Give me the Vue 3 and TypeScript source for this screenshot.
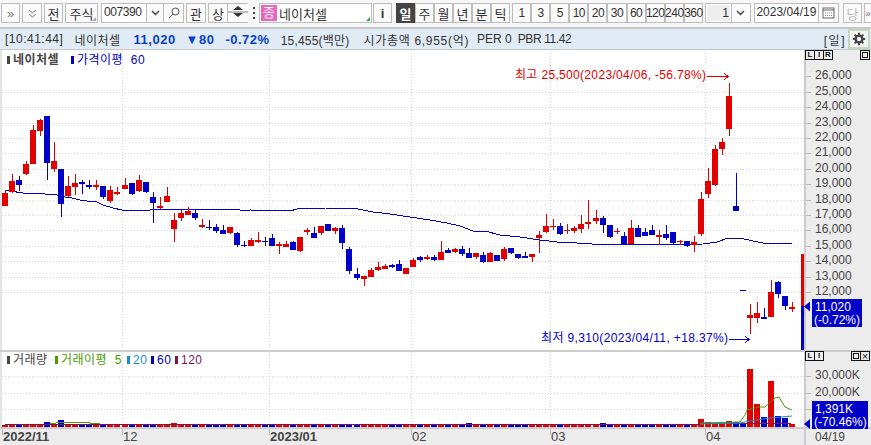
<script setup lang="ts">
import { computed } from 'vue';

// [색(r/b), 꼬리 위, 몸통 위, 몸통 아래, 꼬리 아래] — 화면 y 좌표
type Candle = [string, number, number, number, number];

const RED = '#e00000';
const BLUE = '#0000c8';
const STEP = 7.03;

const raw: Candle[] = [
  ['r', 190, 193, 206, 206], ['r', 174, 181, 192, 193], ['b', 176, 180, 185, 191], ['r', 161, 164, 174, 175],
  ['r', 125, 130, 164, 164], ['r', 119, 120, 131, 136], ['b', 116, 116, 163, 180], ['r', 142, 161, 169, 172],
  ['b', 169, 169, 204, 217], ['r', 176, 186, 196, 197], ['r', 174, 183, 187, 195], ['b', 180, 182, 184, 194],
  ['b', 180, 185, 187, 189], ['r', 180, 185, 187, 190], ['b', 186, 186, 197, 199], ['r', 186, 190, 201, 203],
  ['r', 187, 192, 194, 195], ['r', 178, 185, 189, 189], ['b', 183, 183, 194, 195], ['r', 175, 180, 191, 192],
  ['b', 182, 182, 192, 193], ['b', 192, 197, 203, 223], ['r', 197, 206, 208, 209], ['r', 187, 196, 202, 202],
  ['r', 213, 220, 229, 242], ['r', 210, 213, 218, 221], ['r', 207, 211, 215, 215], ['b', 210, 213, 218, 220],
  ['r', 219, 225, 227, 228], ['b', 220, 227, 228, 230], ['b', 224, 227, 231, 233], ['b', 225, 230, 234, 234],
  ['r', 227, 227, 233, 234], ['b', 232, 233, 245, 247], ['b', 241, 245, 246, 247], ['r', 238, 240, 246, 246],
  ['r', 232, 240, 242, 243], ['b', 237, 241, 242, 246], ['b', 234, 238, 246, 246], ['r', 242, 244, 246, 254],
  ['r', 241, 244, 247, 247], ['b', 241, 242, 250, 250], ['r', 237, 237, 251, 252], ['r', 228, 230, 232, 235],
  ['b', 227, 233, 238, 238], ['r', 226, 226, 233, 235], ['b', 224, 224, 231, 231], ['r', 227, 228, 231, 234],
  ['b', 225, 228, 243, 249], ['b', 247, 249, 271, 274], ['b', 268, 274, 278, 280], ['r', 276, 276, 279, 286],
  ['r', 268, 270, 277, 277], ['r', 262, 267, 270, 271], ['r', 264, 266, 269, 269], ['b', 264, 265, 267, 268],
  ['b', 260, 264, 271, 271], ['r', 268, 268, 274, 274], ['r', 258, 260, 267, 267], ['b', 256, 257, 260, 262],
  ['r', 255, 257, 259, 260], ['b', 255, 257, 260, 261], ['r', 241, 252, 260, 260], ['b', 248, 250, 253, 253],
  ['r', 248, 249, 252, 253], ['b', 246, 249, 254, 256], ['b', 248, 253, 258, 258], ['r', 253, 253, 257, 259],
  ['b', 252, 255, 262, 263], ['r', 252, 253, 262, 262], ['b', 255, 255, 261, 261], ['r', 247, 249, 259, 261],
  ['b', 248, 248, 253, 254], ['b', 254, 254, 258, 259], ['b', 252, 256, 258, 258], ['r', 254, 254, 257, 262],
  ['r', 231, 235, 238, 253], ['r', 214, 226, 232, 233], ['r', 219, 226, 227, 230], ['b', 223, 226, 234, 235],
  ['r', 224, 230, 231, 234], ['r', 226, 228, 231, 233], ['r', 215, 224, 229, 233], ['r', 200, 222, 224, 229],
  ['r', 210, 218, 221, 224], ['b', 216, 218, 225, 233], ['b', 225, 225, 237, 238], ['r', 228, 231, 232, 234],
  ['b', 232, 236, 245, 245], ['r', 220, 228, 244, 244], ['b', 225, 228, 237, 237], ['b', 228, 232, 236, 236],
  ['b', 225, 230, 235, 235], ['r', 230, 235, 237, 245], ['b', 225, 234, 238, 240], ['b', 232, 232, 243, 244],
  ['r', 240, 241, 242, 245], ['b', 241, 241, 246, 247], ['r', 236, 242, 245, 252], ['r', 192, 199, 234, 236],
  ['r', 168, 181, 194, 198], ['r', 145, 149, 185, 186], ['r', 138, 142, 149, 155], ['r', 83, 96, 129, 136],
  ['b', 173, 206, 211, 211], ['b', 290, 290, 291, 291], ['r', 304, 315, 318, 334], ['r', 302, 313, 318, 323],
  ['b', 308, 317, 319, 319], ['r', 280, 292, 317, 317], ['b', 281, 282, 294, 298], ['b', 296, 296, 306, 310],
  ['r', 302, 307, 309, 312],
];

const candleX = (i: number) => Math.round(5 + STEP * i);

const candles = raw.map((c, i) => ({
  x: candleX(i),
  color: c[0] === 'r' ? RED : BLUE,
  wickY: c[1],
  wickH: c[4] - c[1],
  bodyY: c[2],
  bodyH: Math.max(c[3] - c[2], 1),
}));

const maLine = [
  [5, 190], [10, 191], [23, 193], [43, 193], [45, 194], [57, 195], [65, 197], [72, 198], [80, 200], [87, 201],
  [97, 202], [103, 205], [113, 208], [122, 210], [150, 210], [160, 209], [213, 209], [240, 210], [247, 211],
  [250, 210], [290, 211], [297, 209], [325, 208], [358, 209], [373, 212], [390, 214], [410, 217], [430, 220],
  [447, 223], [460, 226], [473, 231], [485, 231], [500, 235], [520, 237], [540, 240], [557, 242], [577, 243],
  [607, 245], [703, 244], [717, 242], [728, 238], [740, 238], [753, 241], [763, 243], [782, 243], [792, 244],
].map((p) => p.join(',')).join(' ');

// 거래량 막대 높이 (대부분 2px)
const volOverride: Record<number, number> = {
  6: 5, 8: 7, 24: 4, 41: 3, 60: 3, 64: 3, 66: 4, 69: 3, 71: 3, 72: 3,
  85: 4, 91: 3, 99: 8, 100: 5, 101: 4, 102: 3, 103: 6, 104: 5, 105: 4,
  106: 58, 107: 23, 108: 10, 109: 46, 110: 11, 111: 9, 112: 3,
};
const volumes = raw.map((c, i) => ({
  x: candleX(i),
  h: volOverride[i] ?? 2,
  color: c[0] === 'r' ? RED : BLUE,
}));

const priceTicks = computed(() => {
  const list: { y: number; label: string }[] = [];
  for (let k = 0; k <= 15; k++) {
    list.push({ y: 76.4 + 15.4 * k, label: `${26 - k},000` });
  }
  return list;
});

const gridV = [122, 269, 411, 550, 705];
const gridH = priceTicks.value.slice(1, 15).map((t) => Math.round(t.y));
const volGrid = [376, 393, 409];
const timeframes = ['1', '3', '5', '10', '20', '30', '60', '120', '240', '360'];
const periods = ['주', '월', '년', '분', '틱'];
const monthLabels = [
  { text: '2022/11', width: 120, bold: true },
  { text: '12', width: 147, bold: false },
  { text: '2023/01', width: 142, bold: true },
  { text: '02', width: 139, bold: false },
  { text: '03', width: 155, bold: false },
  { text: '04', width: 40, bold: false },
];
</script>

<template>
  <div class="app">
    <div class="toolbar">
      <button class="btn w19 dim">»</button>
      <button class="btn w20 dim">
        <svg width="9" height="9" viewBox="0 0 9 9"><path d="M1 1l3.5 3L8 1M1 5l3.5 3L8 5" fill="none" stroke="#777" /></svg>
      </button>
      <button class="btn w19">전</button>
      <button class="btn w33 corner">주식</button>
      <div class="code-box">
        <span class="code">007390</span>
        <span class="cell w17">
          <svg width="9" height="6" viewBox="0 0 9 6"><path d="M1 1l3.5 3.5L8 1" fill="none" stroke="#444" stroke-width="1.4" /></svg>
        </span>
        <span class="cell w20">
          <svg width="12" height="12" viewBox="0 0 12 12"><circle cx="7.5" cy="4.5" r="3.5" fill="none" stroke="#555" /><path d="M5 7L1 11" stroke="#555" /></svg>
        </span>
      </div>
      <button class="btn w20">관</button>
      <button class="btn w20 lead">상</button>
      <div class="updown">
        <span class="tri-up" />
        <span class="tri-down" />
      </div>
      <div class="dots"><i /><i /><i /></div>
      <div class="name-box corner-green">
        <span class="badge">종</span>
        <span>네이처셀</span>
      </div>
      <button class="btn w19 bold-i">i</button>
      <div class="group left4">
        <button class="btn w19 dark">일</button>
        <button v-for="p in periods" :key="p" class="btn w19">{{ p }}</button>
      </div>
      <div class="group left2">
        <button v-for="t in timeframes" :key="t" class="btn tf">{{ t }}</button>
      </div>
      <div class="count-box">
        <span class="count">1</span>
        <span class="cell w18">
          <svg width="9" height="6" viewBox="0 0 9 6"><path d="M1 1l3.5 3.5L8 1" fill="none" stroke="#444" stroke-width="1.4" /></svg>
        </span>
      </div>
      <div class="date-box">
        <span class="date">2023/04/19</span>
        <span class="cell w20">
          <svg width="13" height="12" viewBox="0 0 13 12"><rect x="1" y="1" width="11" height="10" fill="none" stroke="#666" /><path d="M1 3h11" stroke="#666" /><path d="M3 6h7M3 8.500h7" stroke="#888" stroke-dasharray="1 1" /></svg>
        </span>
      </div>
      <button class="btn w19 faded">당</button>
      <button class="btn w8 dim">»</button>
    </div>

    <div class="infobar">
      <span class="clock">[10:41:44]</span>
      <span class="iname">네이처셀</span>
      <b class="down price">11,020</b>
      <b class="down chg">▼80</b>
      <b class="down pct">-0.72%</b>
      <span class="amt">15,455(백만)</span>
      <span class="cap">시가총액 6,955(억)</span>
      <span class="per">PER 0</span>
      <span class="pbr">PBR 11.42</span>
      <span class="unit">[일]</span>
      <button class="gear">
        <svg width="14" height="14" viewBox="0 0 14 14">
          <circle cx="7" cy="7" r="3.400" fill="none" stroke="#444" stroke-width="2.400" />
          <path d="M7 .8v2.400M7 10.800v2.400M.8 7h2.400M10.800 7h2.400M2.600 2.600l1.700 1.700M9.700 9.700l1.700 1.700M2.600 11.400l1.700-1.700M9.700 4.300l1.700-1.700" stroke="#444" stroke-width="2" />
        </svg>
      </button>
    </div>

    <div class="pane price-pane">
      <div class="plot">
        <svg class="chart" width="804" height="300" viewBox="0 50 804 300" shape-rendering="crispEdges">
          <rect x="0" y="50" width="2" height="300" fill="#e4e4e4" />
          <line v-for="y in gridH" :key="y" x1="2" x2="804" :y1="y + 0.5" :y2="y + 0.5" class="grid" />
          <line v-for="x in gridV" :key="x" :x1="x + 0.5" :x2="x + 0.5" y1="50" y2="350" class="grid" />
          <polyline :points="maLine" fill="none" :stroke="BLUE" stroke-width="1" />
          <g v-for="c in candles" :key="c.x">
            <rect :x="c.x" :y="c.wickY" width="1" :height="c.wickH" :fill="c.color" />
            <rect :x="c.x - 3" :y="c.bodyY" width="6" :height="c.bodyH" :fill="c.color" />
          </g>
          <rect x="801" y="254" width="3" height="52" :fill="RED" />
          <rect x="801" y="306" width="3" height="44" :fill="BLUE" />
          <text x="515" y="79" class="note" :fill="RED" textLength="191">최고 25,500(2023/04/06, -56.78%)</text>
          <path d="M707 76.500h21M724 73l4 3.500l-4 3.500" fill="none" :stroke="RED" />
          <text x="541" y="342" class="note" :fill="BLUE" textLength="187">최저 9,310(2023/04/11, +18.37%)</text>
          <path d="M729 339.500h20M745 336l4 3.500l-4 3.500" fill="none" :stroke="BLUE" />
        </svg>
        <div class="legend">
          <span class="item strong"><i class="mark" />네이처셀</span>
          <span class="item blue"><i class="mark" />가격이평&nbsp; 60</span>
        </div>
      </div>
      <div class="axis">
        <svg width="67" height="300" viewBox="804 50 67 300">
          <g v-for="t in priceTicks" :key="t.y">
            <line x1="806" x2="811" :y1="Math.round(t.y) + 0.5" :y2="Math.round(t.y) + 0.5" stroke="#bbb" />
            <text x="815" :y="t.y + 3" class="tick">{{ t.label }}</text>
          </g>
          <path d="M804 306.500l6-5v10z" :fill="BLUE" />
          <rect x="812" y="299" width="50" height="28" :fill="BLUE" />
          <text x="815" y="311" class="tag">11,020</text>
          <text x="814" y="324" class="tag">(-0.72%)</text>
        </svg>
        <div class="axis-btns">
          <div class="boxes"><span>L</span><span>I</span><span>R</span></div>
          <div class="boxes"><span class="sq" /></div>
        </div>
      </div>
    </div>

    <div class="pane vol-pane">
      <div class="plot">
        <svg class="chart" width="804" height="75" viewBox="0 352 804 75" shape-rendering="crispEdges">
          <rect x="0" y="352" width="2" height="75" fill="#e4e4e4" />
          <line v-for="y in volGrid" :key="y" x1="2" x2="804" :y1="y + 0.5" :y2="y + 0.5" class="grid" />
          <line v-for="x in gridV" :key="x" :x1="x + 0.5" :x2="x + 0.5" y1="352" y2="427" class="grid" />
          <rect v-for="v in volumes" :key="v.x" :x="v.x - 3" :y="427 - v.h" width="6" :height="v.h" :fill="v.color" />
          <polyline points="5,424 50,424 56,423 70,422 90,423 100,424" fill="none" stroke="#4a9a00" />
          <polyline points="5,424 699,424 792,423" fill="none" stroke="#7a1a50" />
          <polyline points="700,423 740,422 745,415 747,410 760,407 765,407 775,398 779,397 785,407 792,410" fill="none" stroke="#4a9a00" shape-rendering="auto" />
          <polyline points="700,424 740,423 750,421 770,418 792,416" fill="none" stroke="#1a8ad8" shape-rendering="auto" />
        </svg>
        <div class="legend vol-legend">
          <span class="item dark-t"><i class="mark" />거래량</span>
          <span class="item green"><i class="mark" />거래이평&nbsp; 5</span>
          <span class="item sky"><i class="mark" />20</span>
          <span class="item blue"><i class="mark" />60</span>
          <span class="item plum"><i class="mark" />120</span>
        </div>
      </div>
      <div class="axis">
        <svg width="67" height="75" viewBox="804 352 67 75">
          <line v-for="y in [376, 393, 409, 425]" :key="y" x1="806" x2="811" :y1="y + 0.5" :y2="y + 0.5" stroke="#bbb" />
          <text x="815" y="379" class="tick">30,000K</text>
          <text x="815" y="396" class="tick">20,000K</text>
          <path d="M804 424l6-5v10z" :fill="BLUE" />
          <rect x="812" y="401" width="56" height="28" :fill="BLUE" />
          <text x="815" y="413" class="tag">1,391K</text>
          <text x="814" y="426" class="tag">(-70.46%)</text>
        </svg>
        <div class="axis-btns vol-btns">
          <div class="boxes"><span>L</span><span>I</span></div>
          <div class="boxes"><span class="sq" /><span class="x">×</span></div>
        </div>
      </div>
    </div>

    <div class="xaxis">
      <div class="xlabels">
        <span
          v-for="m in monthLabels"
          :key="m.text"
          class="xl"
          :class="{ bold: m.bold }"
          :style="{ width: `${m.width}px` }"
        >{{ m.text }}</span>
      </div>
      <div class="xdate">04/19</div>
    </div>
  </div>
</template>

<style>
html,
body {
  margin: 0;
  background: #fff;
}
</style>

<style scoped>
.app {
  width: 871px;
  height: 445px;
  overflow: hidden;
  display: flex;
  flex-direction: column;
  font-family: "Liberation Sans", "Noto Sans CJK KR", sans-serif;
  font-size: 12px;
  color: #333;
  background: #fff;
}

/* 상단 툴바 */
.toolbar {
  height: 29px;
  flex: none;
  display: flex;
  align-items: flex-start;
  padding: 3px 0 0 1px;
  box-sizing: border-box;
  background: #f7f7f7;
  border-bottom: 2px solid #c8c8c8;
}
.btn {
  height: 20px;
  padding: 0;
  box-sizing: border-box;
  border: 1px solid #bdbdbd;
  background: #fafafa;
  font: inherit;
  font-size: 13px;
  color: #333;
  display: flex;
  align-items: center;
  justify-content: center;
  flex: none;
}
.w8 { width: 8px; font-size: 10px; }
.w19 { width: 19px; }
.w20 { width: 20px; }
.w33 { width: 33px; }
.toolbar > .btn + .btn { margin-left: 2px; }
.dim { color: #777; }
.faded { color: #bbb; margin-left: 4px !important; }
.corner { position: relative; }
.corner::after {
  content: "";
  position: absolute;
  right: 1px;
  bottom: 1px;
  border-left: 4px solid transparent;
  border-bottom: 4px solid #aaa;
}
.code-box,
.count-box,
.date-box {
  display: flex;
  height: 20px;
  box-sizing: border-box;
  border: 1px solid #bdbdbd;
  background: #fff;
  flex: none;
}
.code-box { margin: 0 2px 0 3px; width: 83px; }
.code { width: 44px; padding-left: 2px; font-size: 12px; letter-spacing: -0.4px; line-height: 17px; box-sizing: border-box; }
.cell {
  display: flex;
  align-items: center;
  justify-content: center;
  border-left: 1px solid #bdbdbd;
  background: #fafafa;
  flex: none;
  box-sizing: border-box;
}
.w17 { width: 17px; }
.w18 { width: 19px; }
.lead { margin-left: 2px; }
.updown {
  width: 20px;
  height: 20px;
  flex: none;
  box-sizing: border-box;
  display: flex;
  flex-direction: column;
  align-items: center;
  justify-content: space-between;
  padding: 2px 0 5px;
  background: linear-gradient(#fafafa 7px, #bdbdbd 7px, #bdbdbd 9px, #fafafa 9px);
  border-top: 1px solid #bdbdbd;
  border-bottom: 1px solid #bdbdbd;
}
.tri-up { border: 5px solid transparent; border-top: 0; border-bottom: 4px solid #333; }
.tri-down { border: 5px solid transparent; border-bottom: 0; border-top: 4px solid #333; }
.dots {
  width: 11px;
  flex: none;
  height: 20px;
  display: flex;
  flex-direction: column;
  align-items: center;
  justify-content: center;
  gap: 3px;
}
.dots i { width: 2px; height: 2px; background: #444; }
.name-box {
  position: relative;
  width: 113px;
  height: 20px;
  flex: none;
  box-sizing: border-box;
  border: 1px solid #bdbdbd;
  background: #fff;
  display: flex;
  align-items: center;
  gap: 2px;
  font-size: 13px;
}
.corner-green::after {
  content: "";
  position: absolute;
  right: 1px;
  bottom: 1px;
  border-left: 4px solid transparent;
  border-bottom: 4px solid #2aa84a;
}
.badge {
  width: 16px;
  height: 16px;
  margin-left: 1px;
  background: #ee66bb;
  color: #fff;
  text-align: center;
  line-height: 16px;
}
.bold-i { font-weight: 700; margin-left: 1px; }
.group { display: flex; flex: none; }
.left4 { margin-left: 4px; }
.left2 { margin-left: 2px; }
.dark { background: #444; color: #fff; border-color: #444; font-weight: 700; }
.tf { width: 19.100px; font-size: 12px; letter-spacing: -0.5px; }
.count-box { width: 46px; margin-left: 2px; }
.count {
  flex: 1;
  background: #eee;
  margin: 1px;
  text-align: right;
  padding-right: 1px;
  line-height: 16px;
}
.date-box { width: 85px; margin-left: 3px; }
.date { width: 65px; text-align: center; line-height: 17px; font-size: 12px; }

/* 현재가 정보줄 */
.infobar {
  height: 21px;
  flex: none;
  box-sizing: border-box;
  background: #e1ebf5;
  border-bottom: 1px solid #c8c8c8;
  display: flex;
  align-items: center;
  padding-left: 5px;
  white-space: nowrap;
  letter-spacing: 0.5px;
}
.iname { margin-left: 11px; }
.down { color: #0a3fc8; font-size: 13px; }
.price { margin-left: 13px; }
.chg { margin-left: 10px; }
.pct { margin-left: 11px; }
.amt { margin-left: 11px; letter-spacing: 0.2px; }
.cap { margin-left: 14px; letter-spacing: 0.7px; }
.per { margin-left: 8px; letter-spacing: 0; }
.pbr { margin-left: 6px; letter-spacing: -0.4px; }
.unit { margin-left: auto; margin-right: 2px; letter-spacing: 1.5px; }
.gear {
  width: 22px;
  height: 20px;
  box-sizing: border-box;
  padding: 0;
  border: 2px solid #c5d6c0;
  background: #f5f5f5;
  display: flex;
  align-items: center;
  justify-content: center;
  margin-right: 1px;
}

/* 차트 영역 */
.pane {
  display: flex;
  flex: none;
}
.price-pane {
  height: 300px;
  border-bottom: 2px solid #ccc;
}
.vol-pane { height: 75px; }
.plot {
  position: relative;
  width: 804px;
  height: 100%;
  flex: none;
}
.chart { display: block; }
.grid {
  stroke: #d8d8d8;
  stroke-dasharray: 1 2;
}
.note { font-size: 12px; }
.axis {
  position: relative;
  width: 67px;
  flex: none;
  background: #ececec;
  box-shadow: inset 2px 0 0 #ccc;
}
.axis svg { display: block; position: relative; overflow: visible; }
.tick {
  font-size: 12px;
  fill: #444;
}
.tag {
  font-size: 12px;
  fill: #fff;
}
.axis-btns {
  position: absolute;
  top: 0;
  left: 2px;
  right: 1px;
  display: flex;
  justify-content: space-between;
}
.vol-btns { top: -1px; }
.boxes { display: flex; }
.boxes span {
  width: 8px;
  height: 8px;
  border: 1px solid #111;
  margin-left: -1px;
  font-size: 8px;
  line-height: 8px;
  text-align: center;
  color: #111;
  background: #eee;
  font-weight: 700;
}
.boxes .sq::after {
  content: "";
  display: block;
  width: 4px;
  height: 4px;
  margin: 1px;
  border: 1px solid #111;
}
.boxes .x { font-size: 11px; font-weight: 400; }
.legend {
  position: absolute;
  top: 3px;
  left: 7px;
  display: flex;
  font-size: 12px;
  line-height: 14px;
  letter-spacing: 0.5px;
}
.vol-legend { top: 1px; }
.item { display: flex; align-items: center; white-space: nowrap; }
.mark { width: 3px; height: 8px; background: currentColor; margin-right: 3px; }
.strong { color: #444; font-weight: 700; width: 64px; }
.dark-t { color: #444; width: 48px; }
.blue { color: #0000c8; }
.green { color: #4a9a00; width: 72px; }
.sky { color: #1a8ad8; width: 24px; }
.vol-legend .blue { width: 24px; }
.plum { color: #7a1a50; }

/* 하단 시간축 */
.xaxis {
  flex: 1;
  display: flex;
  background: #ececec;
  border-top: 2px solid #ccc;
}
.xlabels {
  width: 804px;
  flex: none;
  display: flex;
  padding-left: 2px;
  box-sizing: border-box;
  font-size: 13px;
  line-height: 16px;
}
.xl {
  position: relative;
  flex: none;
  box-sizing: border-box;
  padding-left: 1px;
  color: #444;
}
.xl::before {
  content: "";
  position: absolute;
  left: 0;
  top: 0;
  width: 1px;
  height: 6px;
  background: #bbb;
}
.bold { font-weight: 700; }
.xdate {
  flex: 1;
  padding-left: 11px;
  line-height: 16px;
  color: #444;
  box-shadow: inset 2px 0 0 #ccc;
}
</style>
